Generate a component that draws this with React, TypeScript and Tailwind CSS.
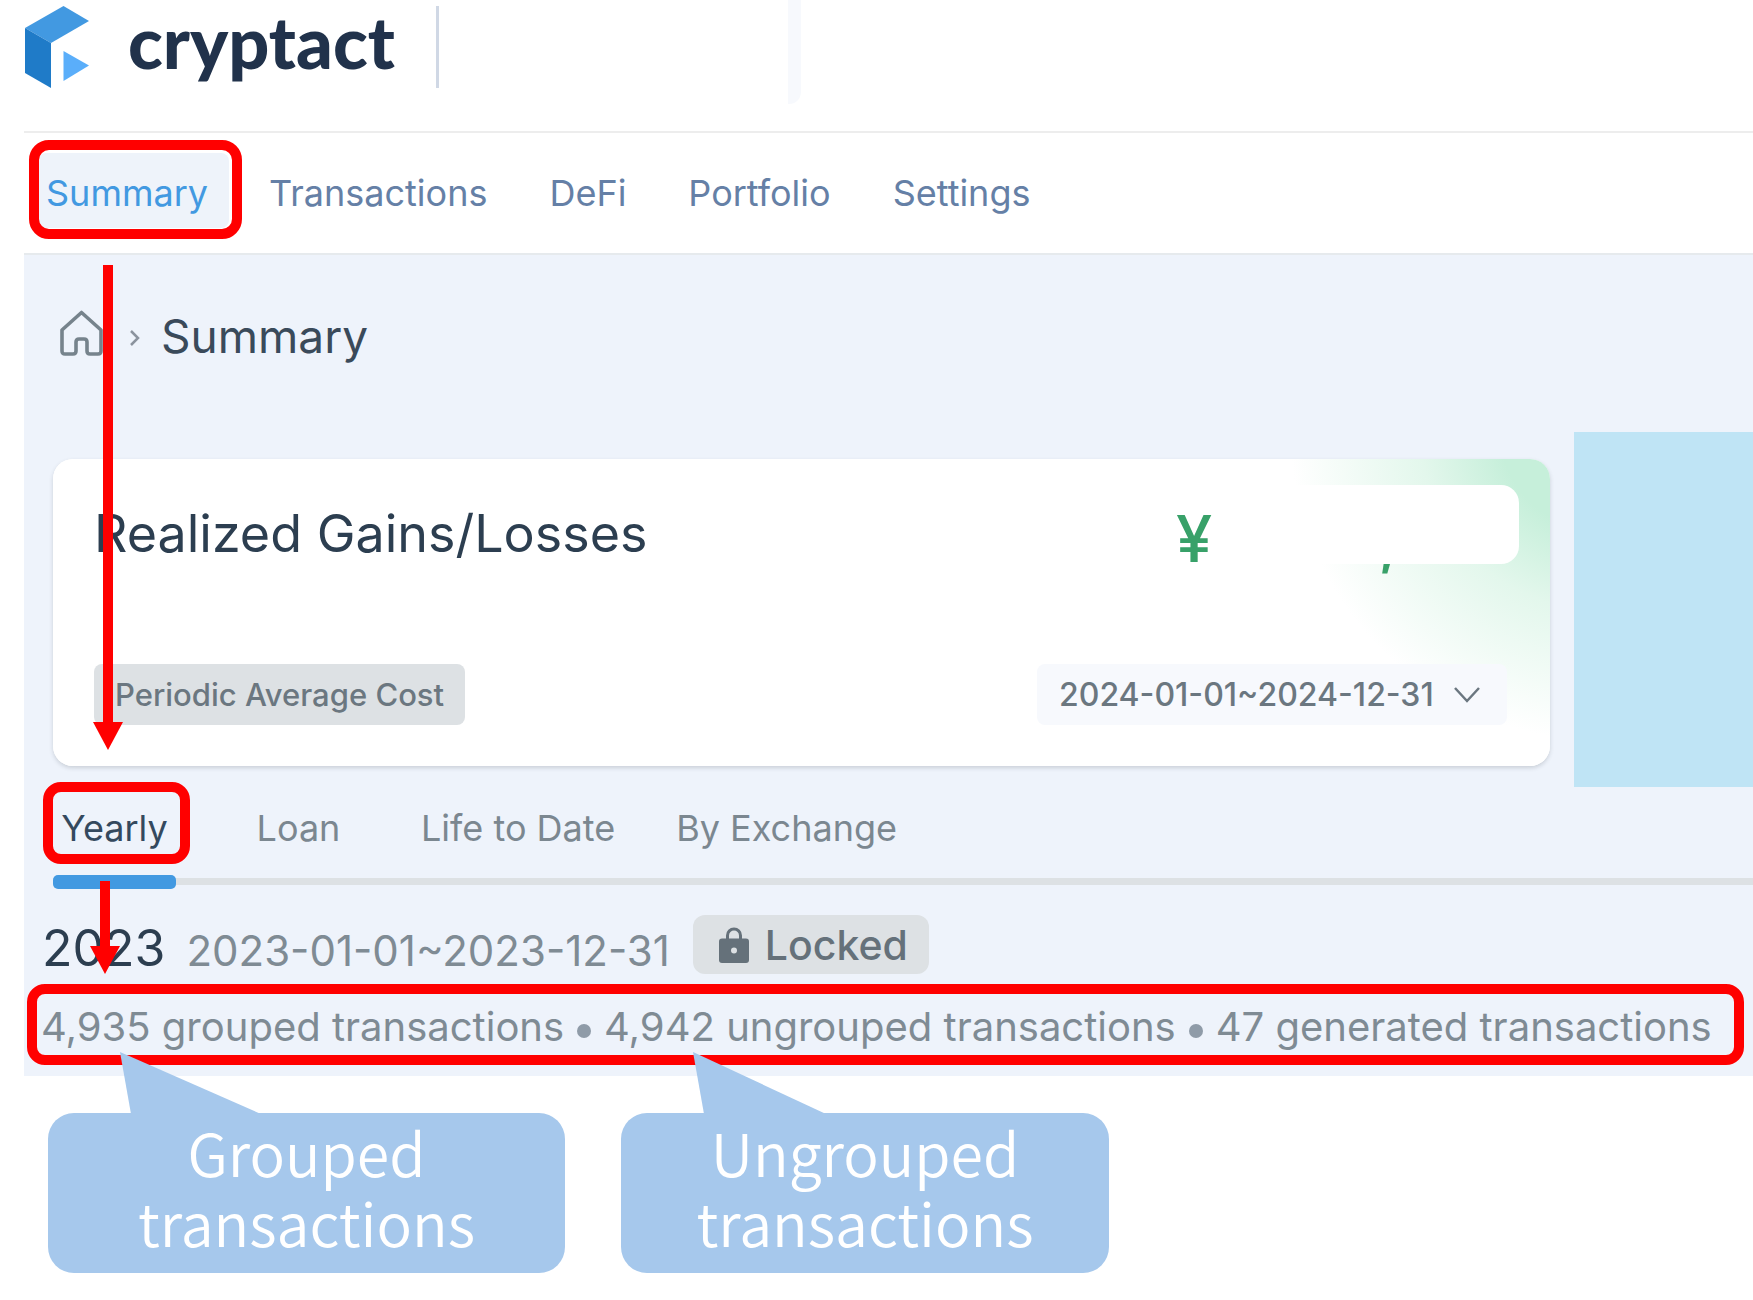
import { ReactNode } from "react";

const NAV_ITEMS = ["Transactions", "DeFi", "Portfolio", "Settings"];
const TABS = ["Yearly", "Loan", "Life to Date", "By Exchange"];
const STATS = [
  "4,935 grouped transactions",
  "4,942 ungrouped transactions",
  "47 generated transactions",
];

function Logo() {
  return (
    <svg width="66" height="82" viewBox="0 0 66 82" aria-hidden="true">
      <path d="M39.5 0 65 15 27 37 1 22Z" fill="#4299e1" />
      <path d="M1 22 27 37V82L1 67Z" fill="#1f7bc8" />
      <path d="M39.5 45 65 59.5 39.5 75Z" fill="#5aaefa" />
    </svg>
  );
}

function HomeIcon() {
  return (
    <svg width="44" height="46" viewBox="0 0 44 46" fill="none" stroke="#76838c" strokeWidth="3.6" strokeLinejoin="round" aria-hidden="true">
      <path d="M2 20 21.5 2.5 41 20V41Q41 44 38 44H30Q27 44 27 41V32Q27 29 24 29H19Q16 29 16 32V41Q16 44 13 44H5Q2 44 2 41Z" />
    </svg>
  );
}

function LockIcon() {
  return (
    <svg width="30" height="36" viewBox="0 0 30 36" aria-hidden="true">
      <path d="M8.500 13V8.500a6.500 6.500 0 0 1 13 0V13" fill="none" stroke="#65717a" strokeWidth="3" />
      <rect y="11.500" width="30" height="24.500" rx="3" fill="#65717a" />
      <circle cx="15" cy="23.500" r="3" fill="#dde1e4" />
    </svg>
  );
}

function Arrow({ length, className }: { length: number; className: string }) {
  return (
    <svg width="30" height={length} className={"absolute pointer-events-none " + className} fill="#ff0000" aria-hidden="true">
      <rect x="10" width="10" height={length - 26} />
      <path d={`M0 ${length - 28}H30L15 ${length}Z`} />
    </svg>
  );
}

function Callout({ tail, className, children }: { tail: number; className: string; children: ReactNode }) {
  return (
    <div className={"relative rounded-[26px] bg-[#a6c8ec] pt-1 pb-4 text-center font-['Noto_Sans_CJK_JP',sans-serif] text-[59px] leading-[70px] font-[350] text-white " + className}>
      <svg width={tail} height="62" className="absolute -top-[61px] left-[72px]" aria-hidden="true">
        <path d={`M0 0 11 62H${tail}Z`} fill="#a6c8ec" />
      </svg>
      {children}
    </div>
  );
}

function Header() {
  return (
    <header className="ml-6 border-b-2 border-[#ededed]">
      <div className="flex h-[131px] items-start">
        <div className="flex items-center pt-[6px]">
          <Logo />
          <span className="ml-[38px] -mt-3 font-['Lato',sans-serif] text-[72px] leading-[72px] font-black text-[#21324b]">cryptact</span>
          <span className="ml-[41px] h-[82px] w-[3px] bg-[#d0d8e5]" />
        </div>
        <span className="ml-[349px] h-[104px] w-[13px] rounded-br-[12px] bg-[#f7f9fd]" />
      </div>
    </header>
  );
}

function GainsCard() {
  return (
    <section className="relative mt-[27px] ml-[29px] flex-1 overflow-hidden rounded-[20px] bg-white pt-[42px] pr-[43px] pb-[41px] pl-[41px] shadow-[0_2px_4px_rgba(60,70,80,0.2)]">
      <div className="absolute inset-0 bg-[radial-gradient(circle_at_calc(100%+50px)_-29px,#c6efda_0,#c6efda_100px,#e3f7ec_180px,#ffffff_310px)]" />
      <div className="relative flex items-start justify-between">
        <h2 className="text-[52px] leading-[66px] text-[#2c3e50]">Realized Gains/Losses</h2>
        <p className="flex w-[331px] gap-[166px] pt-[6px] text-[65px] leading-[64px] font-medium text-[#38a169]">
          <span>¥</span>
          <span>,</span>
        </p>
      </div>
      <div className="absolute top-[26px] right-[31px] h-[79px] w-[240px] rounded-[18px] bg-white" />
      <div className="relative mt-[93px] flex items-center justify-between">
        <span className="rounded-lg bg-[#dde1e4] px-[21px] text-[31px] leading-[61px] font-medium text-[#6b7780]">Periodic Average Cost</span>
        <div className="relative">
          <select aria-label="Period" className="h-[61px] w-[470px] appearance-none rounded-lg bg-[#f7f9fd] pl-[22px] text-[32px] font-medium text-[#6b7780]">
            <option>2024-01-01~2024-12-31</option>
          </select>
          <svg width="26" height="16" viewBox="0 0 26 16" fill="none" stroke="#6b7780" strokeWidth="2.500" className="pointer-events-none absolute top-[23px] right-[27px]" aria-hidden="true">
            <path d="M1 1 13 14 25 1" />
          </svg>
        </div>
      </div>
    </section>
  );
}

export default function App() {
  return (
    <div className="relative overflow-hidden bg-white pb-6 font-['Inter',sans-serif] whitespace-nowrap">
      <Header />

      <nav className="ml-6 flex h-[122px] items-start gap-[62px] border-b-2 border-[#e6eaed] pt-5 pl-[14px] text-[36px] text-[#6580a6]">
        <a href="#summary" className="relative -mr-[22px] h-[75px] rounded-lg bg-[#eef3fa] pt-[3px] pr-[21px] pl-2 leading-[75px] text-[#4299e1]">
          Summary
          <span className="absolute -top-[13px] -right-[13px] -bottom-[11px] -left-[9px] rounded-[20px] border-10 border-[#ff0000]" />
        </a>
        {NAV_ITEMS.map((item) => (
          <a key={item} href={"#" + item.toLowerCase()} className="pt-[3px] leading-[75px]">{item}</a>
        ))}
      </nav>

      <main className="ml-6 bg-[#eef3fb] pt-[53px] pb-[11px]">
        <div className="flex items-center pl-9 text-[46px] leading-[56px] text-[#3a4a5a]">
          <a href="#home" aria-label="Home" className="pb-[7px]"><HomeIcon /></a>
          <svg width="10" height="16" viewBox="0 0 10 16" fill="none" stroke="#8b939e" strokeWidth="2.500" className="mt-1 ml-[26px]" aria-hidden="true">
            <path d="M1 1 8 8 1 15" />
          </svg>
          <h1 className="ml-[21px]">Summary</h1>
        </div>

        <div className="mt-[68px] flex items-start gap-6">
          <GainsCard />
          <aside className="h-[355px] w-[179px] bg-[#bfe4f5]" />
        </div>

        <div className="mt-[19px] ml-[29px] flex gap-[61px] text-[36px] leading-[44px] text-[#7b8790]">
          {TABS.map((tab, i) => (
            <button key={tab} type="button" className={i === 0 ? "relative min-w-[123px] text-[#34495e]" : "min-w-[123px]"}>
              {tab}
              {i === 0 && <span className="absolute -top-6 right-[-14px] -bottom-[14px] -left-[10px] rounded-[18px] border-10 border-[#ff0000]" />}
            </button>
          ))}
        </div>
        <div className="relative mt-7 ml-[29px] h-[7px] bg-[#dde1e4]">
          <div className="absolute -top-[3px] h-[14px] w-[123px] rounded-[5px] bg-[#4299e1]" />
        </div>

        <div className="mt-[30px] ml-[18px] flex h-[59px] items-center">
          <div className="flex items-baseline gap-[21px] pt-[10px] leading-[56px]">
            <h2 className="text-[50px] text-[#2c3e50]">2023</h2>
            <span className="text-[42px] text-[#7f8b94]">2023-01-01~2023-12-31</span>
          </div>
          <span className="ml-[23px] flex h-[59px] items-center gap-4 rounded-xl bg-[#dde1e4] pr-[21px] pl-[26px] text-[41px] font-medium text-[#65717a]">
            <LockIcon />
            <span className="pt-[2px]">Locked</span>
          </span>
        </div>

        <div className="mt-[10px] mr-[9px] ml-[3px] flex h-[81px] items-center gap-[13px] rounded-[18px] border-10 border-[#ff0000] pt-1 pl-1 text-[40px] text-[#7f8b94]">
          {STATS.map((stat, i) => (
            <div key={stat} className="flex items-center gap-[13px]">
              {i > 0 && <span className="mt-2 size-[14px] rounded-full bg-[#8f9ba8]" />}
              <span>{stat}</span>
            </div>
          ))}
        </div>
      </main>

      <div className="mt-[37px] ml-12 flex gap-14">
        <Callout tail={141} className="w-[517px]">Grouped<br />transactions</Callout>
        <Callout tail={133} className="w-[488px]">Ungrouped<br />transactions</Callout>
      </div>

      <Arrow length={485} className="top-[265px] left-[93px]" />
      <Arrow length={93} className="top-[881px] left-[90px]" />
    </div>
  );
}
